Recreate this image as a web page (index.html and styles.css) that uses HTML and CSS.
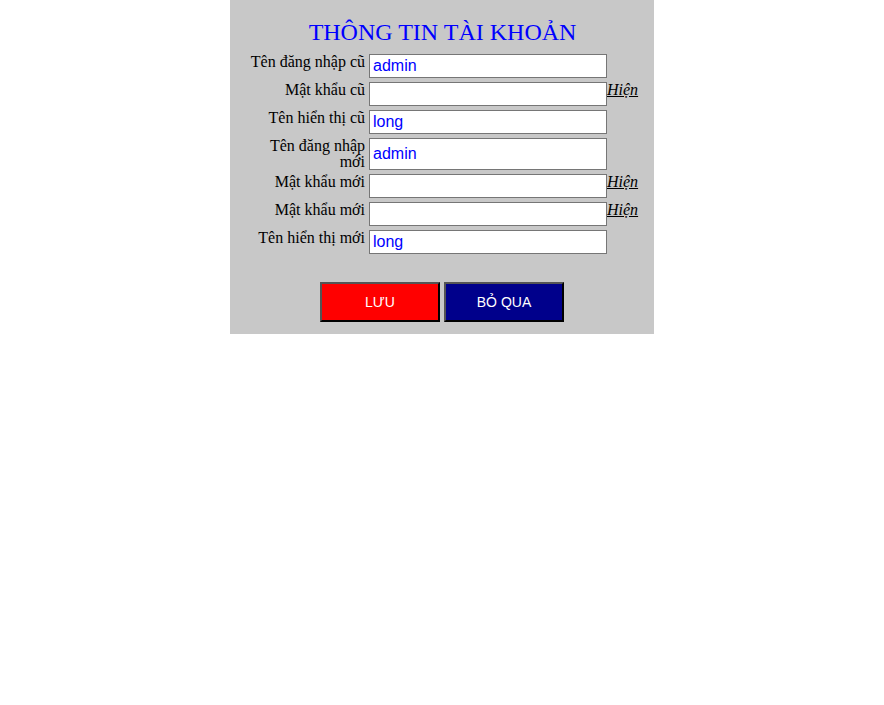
FILE: index.html
```html
<!DOCTYPE html>
<html lang="vi">
<head>
<meta charset="utf-8">
<title>Thông tin tài khoản</title>
<link rel="stylesheet" href="styles.css">
</head>
<body>
<div class="panel">
  <h1 class="title">THÔNG TIN TÀI KHOẢN</h1>
  <div class="form">
    <label class="lbl">Tên đăng nhập cũ</label>
    <input class="field" type="text" value="admin">
    <span></span>

    <label class="lbl">Mật khẩu cũ</label>
    <input class="field" type="password" value="">
    <a class="show" href="#">Hiện</a>

    <label class="lbl">Tên hiển thị cũ</label>
    <input class="field" type="text" value="long">
    <span></span>

    <label class="lbl">Tên đăng nhập mới</label>
    <input class="field" type="text" value="admin">
    <span></span>

    <label class="lbl">Mật khẩu mới</label>
    <input class="field" type="password" value="">
    <a class="show" href="#">Hiện</a>

    <label class="lbl">Mật khẩu mới</label>
    <input class="field" type="password" value="">
    <a class="show" href="#">Hiện</a>

    <label class="lbl">Tên hiển thị mới</label>
    <input class="field" type="text" value="long">
    <span></span>
  </div>
  <div class="actions">
    <button class="btn btn-save" type="button">LƯU</button>
    <button class="btn btn-skip" type="button">BỎ QUA</button>
  </div>
</div>
</body>
</html>
```
FILE: styles.css
```css
html, body {
  margin: 0;
  padding: 0;
  background: #ffffff;
}
body {
  font-family: "Liberation Serif", "Times New Roman", serif;
  font-size: 16px;
}
.panel {
  width: 424px;
  margin: 0 auto;
  background: #c8c8c8;
  padding: 18px 0 12px;
  box-sizing: border-box;
}
.title {
  margin: 0 0 8px;
  font-family: "Liberation Serif", "Times New Roman", serif;
  font-weight: normal;
  font-size: 24px;
  line-height: 28px;
  color: #0000ff;
  text-align: center;
  padding-left: 1px;
}
.form {
  display: grid;
  grid-template-columns: 120px 238px 32px;
  column-gap: 0;
  row-gap: 4px;
  padding-left: 19px;
}
.lbl {
  text-align: right;
  line-height: 16px;
  padding-right: 4px;
  color: #000;
}
.field {
  box-sizing: border-box;
  min-height: 24px;
  margin: 0;
  border: 1px solid #767676;
  background: #fff;
  padding: 0 3px;
  font-family: "Liberation Sans", Arial, sans-serif;
  font-size: 16px;
  color: #0000ff;
  outline: none;
}
.show {
  font-style: italic;
  color: #000;
  text-decoration: underline;
  line-height: 16px;
}
.actions {
  display: flex;
  justify-content: center;
  gap: 4px;
  margin-top: 28px;
}
.btn {
  box-sizing: border-box;
  width: 120px;
  height: 40px;
  border-style: solid;
  border-width: 2px;
  border-color: #555555 #000000 #000000 #555555;
  font-family: "Liberation Sans", Arial, sans-serif;
  font-size: 14px;
  color: #ffffff;
  padding: 0;
  cursor: pointer;
}
.btn-save {
  background: #ff0000;
}
.btn-skip {
  background: #00008b;
}
```
